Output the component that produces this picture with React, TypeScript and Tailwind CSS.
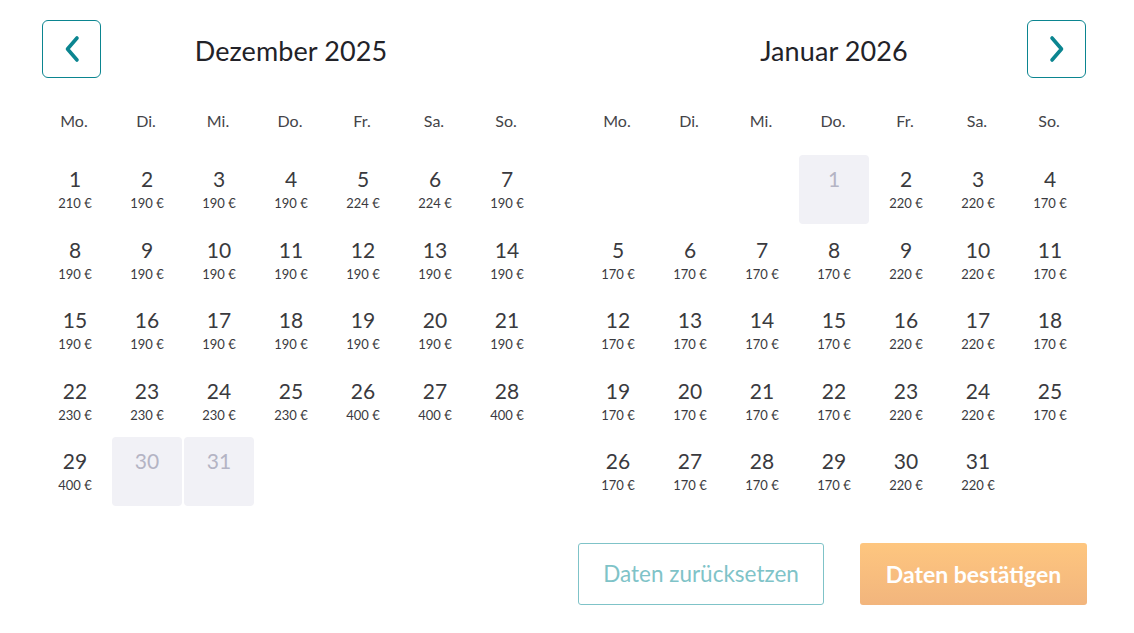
const WEEKDAYS = ['Mo.', 'Di.', 'Mi.', 'Do.', 'Fr.', 'Sa.', 'So.'];

type Day = { day: number; price?: number; disabled?: boolean } | null;

function decPrice(d: number): number {
  if (d === 1) return 210;
  if (d === 5 || d === 6) return 224;
  if (d >= 22 && d <= 25) return 230;
  if (d >= 26) return 400;
  return 190;
}

const december: Day[] = Array.from({ length: 31 }, (_, i) => {
  const d = i + 1;
  return d >= 30 ? { day: d, disabled: true } : { day: d, price: decPrice(d) };
});

// Jan 2026 starts on a Thursday
const january: Day[] = [
  null,
  null,
  null,
  ...Array.from({ length: 31 }, (_, i) => {
    const d = i + 1;
    if (d === 1) return { day: d, disabled: true };
    const col = (d + 2) % 7; // 0 = Mo
    return { day: d, price: col === 4 || col === 5 ? 220 : 170 };
  }),
];

function Chevron({ dir }: { dir: 'left' | 'right' }) {
  return (
    <svg width="16" height="28" viewBox="0 0 16 28" fill="none">
      <path
        d={dir === 'left' ? 'M13 3 L3.5 14 L13 25' : 'M3 3 L12.5 14 L3 25'}
        stroke="#0b8590"
        strokeWidth="3.6"
        strokeLinecap="round"
        strokeLinejoin="round"
      />
    </svg>
  );
}

function NavButton({ dir }: { dir: 'left' | 'right' }) {
  return (
    <button className="w-[59px] h-[58px] rounded-[6px] border border-[#0b8590] bg-white flex items-center justify-center">
      <Chevron dir={dir} />
    </button>
  );
}

function Month({ title, days, nav }: { title: string; days: Day[]; nav: 'left' | 'right' }) {
  return (
    <div className="w-[502px]">
      <div className="grid grid-cols-[61px_1fr_61px] items-center h-[58px]">
        <div className="pl-[2px]">{nav === 'left' && <NavButton dir="left" />}</div>
        <div className="text-center text-[27px] text-[#222228] pt-[5px] tracking-[0.1px]">{title}</div>
        <div className="flex justify-end -mr-[1px]">{nav === 'right' && <NavButton dir="right" />}</div>
      </div>
      <div className="grid grid-cols-7 gap-x-[2px] mt-[28px] h-[30px] items-center">
        {WEEKDAYS.map(w => (
          <div key={w} className="text-center text-[16px] text-[#444448] pr-[2px]">
            {w}
          </div>
        ))}
      </div>
      <div className="grid grid-cols-7 gap-x-[2px] gap-y-[1.5px] mt-[19px]">
        {days.map((d, i) =>
          d === null ? (
            <div key={'e' + i} className="h-[69px]" />
          ) : (
            <div
              key={d.day}
              className={
                'h-[69px] rounded-[4px] flex flex-col items-center pt-[12px] ' +
                (d.disabled ? 'bg-[#f1f1f6]' : 'bg-white')
              }
            >
              <div
                className={
                  'text-[21px] leading-[24px] ' + (d.disabled ? 'text-[#b4b4c4]' : 'text-[#3a3a3e]')
                }
              >
                {d.day}
              </div>
              {d.price !== undefined && (
                <div className="text-[13px] leading-[16px] mt-[4px] text-[#3a3a3e]">{d.price} €</div>
              )}
            </div>
          )
        )}
      </div>
    </div>
  );
}

export default function App() {
  return (
    <div
      className="w-[1134px] h-[633px] bg-white pt-5 pl-10 overflow-hidden"
      style={{ fontFamily: '"Source Sans Pro", Lato, "Noto Sans", sans-serif' }}
    >
      <div className="flex gap-[41px]">
        <Month title="Dezember 2025" days={december} nav="left" />
        <Month title="Januar 2026" days={january} nav="right" />
      </div>
      <div className="flex gap-[36px] ml-[538px] mt-[37px]">
        <button className="w-[246px] h-[62px] rounded-[3px] border border-[#7fc3c8] bg-white text-[22.5px] text-[#7fc3c8]">
          Daten zurücksetzen
        </button>
        <button className="w-[227px] h-[62px] rounded-[3px] bg-gradient-to-b from-[#fec67f] to-[#f2b57d] text-[23px] font-bold text-white">
          Daten bestätigen
        </button>
      </div>
    </div>
  );
}
